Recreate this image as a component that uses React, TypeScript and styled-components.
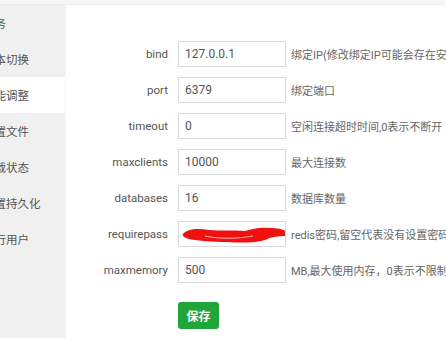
import React from "react";
import styled, { createGlobalStyle } from "styled-components";

const Global = createGlobalStyle`
  html, body { margin: 0; padding: 0; background: #fff; overflow: hidden; }
  body { font-family: Roboto, "Noto Sans CJK SC", sans-serif; }
`;

const Page = styled.div`
  width: 446px;
  height: 338px;
  display: flex;
  flex-direction: column;
  overflow: hidden;
`;

const TopStrip = styled.div`
  height: 4px;
  background: #f6f6f6;
  border-bottom: 1px solid #ececec;
  flex: none;
`;

const Body = styled.div`
  flex: 1;
  display: flex;
  min-height: 0;
`;

const Sidebar = styled.ul`
  list-style: none;
  margin: 0;
  padding: 0;
  width: 65px;
  flex: none;
  background: #f0f0f0;
  border-right: 1px solid #f7f7f7;
  overflow: hidden;
`;

const SideItem = styled.li<{ $active?: boolean }>`
  height: 36px;
  line-height: 36px;
  font-family: "Noto Sans CJK SC", sans-serif;
  font-size: 11.5px;
  color: #555;
  white-space: nowrap;
  text-indent: -17px;
  background: ${(p) => (p.$active ? "#fff" : "transparent")};
`;

const Main = styled.div`
  flex: 1;
  min-width: 0;
  padding-top: 36px;
  overflow: hidden;
`;

const Row = styled.div`
  display: flex;
  align-items: center;
  height: 26px;
  margin-bottom: 10px;
  white-space: nowrap;
`;

const Label = styled.label`
  width: 102px;
  flex: none;
  text-align: right;
  font-size: 11.5px;
  color: #555;
  padding-right: 10px;
  box-sizing: content-box;
`;

const InputBox = styled.div`
  position: relative;
  width: 108px;
  height: 26px;
  flex: none;
  box-sizing: border-box;
  border: 1px solid #d9d9d9;
  display: flex;
  align-items: center;
  padding-left: 6px;
  font-size: 12px;
  color: #555;
`;

const Hint = styled.span`
  margin-left: 5px;
  font-size: 11px;
  color: #666;
  white-space: nowrap;
`;

const Scribble = styled.svg`
  position: absolute;
  left: 0;
  top: 0;
`;

const Actions = styled.div`
  padding-left: 112px;
  padding-top: 9px;
`;

const SaveButton = styled.button`
  width: 41px;
  height: 27px;
  border: none;
  border-radius: 3px;
  background: #20a53a;
  color: #fff;
  font-family: "Noto Sans CJK SC", sans-serif;
  font-size: 12px;
  font-weight: 600;
  padding: 0;
`;

const side = ["服务", "版本切换", "性能调整", "配置文件", "负载状态", "配置持久化", "执行用户"];

const rows = [
  { label: "bind", value: "127.0.0.1", hint: "绑定IP(修改绑定IP可能会存在安全风险)" },
  { label: "port", value: "6379", hint: "绑定端口" },
  { label: "timeout", value: "0", hint: "空闲连接超时时间,0表示不断开" },
  { label: "maxclients", value: "10000", hint: "最大连接数" },
  { label: "databases", value: "16", hint: "数据库数量" },
  { label: "requirepass", value: "", hint: "redis密码,留空代表没有设置密码", secret: true },
  { label: "maxmemory", value: "500", hint: "MB,最大使用内存，0表示不限制" },
];

export default function App() {
  return (
    <Page>
      <Global />
      <TopStrip />
      <Body>
        <Sidebar>
          {side.map((s, i) => (
            <SideItem key={s} $active={i === 2}>{s}</SideItem>
          ))}
        </Sidebar>
        <Main>
          {rows.map((r) => (
            <Row key={r.label}>
              <Label>{r.label}</Label>
              <InputBox>
                {r.value}
                {r.secret && (
                  <Scribble width="108" height="26" viewBox="0 0 108 26">
                    <path
                      d="M4 12 C8 7 18 6 30 8 C42 9 54 8 66 9 C74 7 80 5 90 6 C98 6 104 7 106 9 L106 14 C98 14 92 15 86 18 C76 21 62 21 48 20 C34 20 20 19 10 17 C6 16 3 14 4 12 Z"
                      fill="#f01010"
                    />
                    <path d="M26 14 C40 17 58 17 74 14" stroke="#ffffff" strokeWidth="1" fill="none" opacity="0.7" />
                  </Scribble>
                )}
              </InputBox>
              <Hint>{r.hint}</Hint>
            </Row>
          ))}
          <Actions>
            <SaveButton>保存</SaveButton>
          </Actions>
        </Main>
      </Body>
    </Page>
  );
}
